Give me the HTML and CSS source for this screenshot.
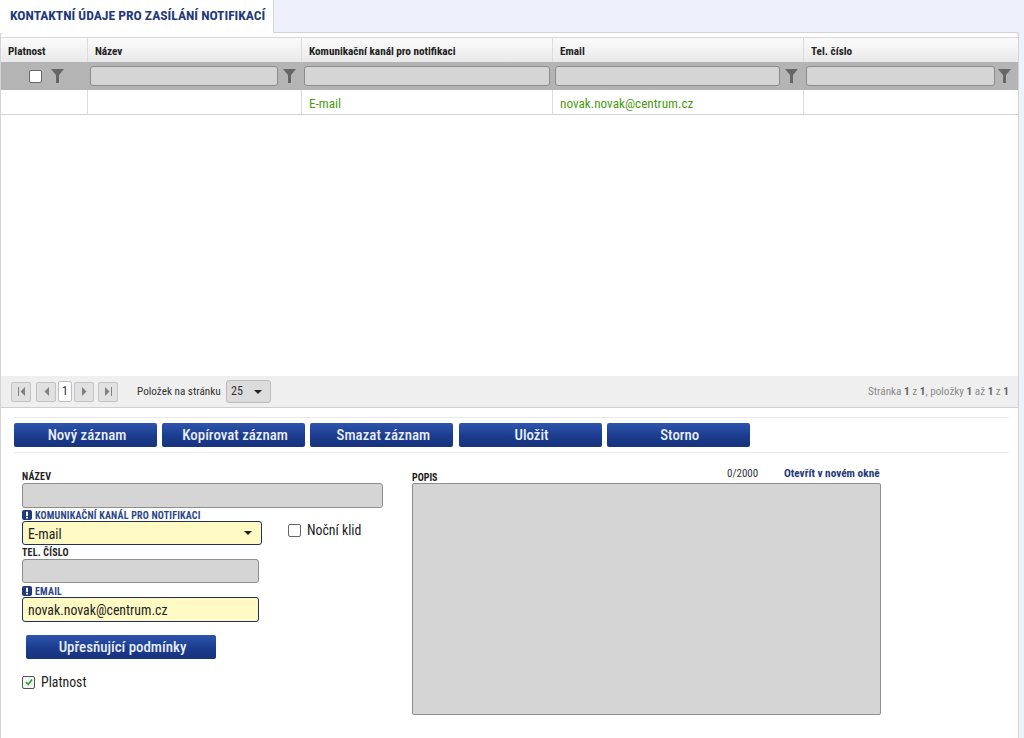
FILE: index.html
```html
<!DOCTYPE html>
<html lang="cs">
<head>
<meta charset="utf-8">
<title>Kontaktní údaje</title>
<link rel="stylesheet" href="styles.css">
</head>
<body>
<svg class="defs" width="0" height="0"><defs>
<symbol id="funnel" viewBox="0 0 13 14"><path d="M0 0H13L8 6V14H5V6Z"/></symbol>
<symbol id="warn" viewBox="0 0 10 10"><rect width="10" height="10" rx="2"/><rect x="4" y="1.7" width="2" height="4.2" fill="#fff"/><rect x="4" y="6.8" width="2" height="1.7" fill="#fff"/></symbol>
</defs></svg>
<div class="tabs"><div class="tab">KONTAKTNÍ ÚDAJE PRO ZASÍLÁNÍ NOTIFIKACÍ</div></div>
<main class="panel">
  <section class="grid">
    <div class="row head">
      <div class="c c1">Platnost</div><div class="c c2">Název</div><div class="c c3">Komunikační kanál pro notifikaci</div><div class="c c4">Email</div><div class="c c5">Tel. číslo</div>
    </div>
    <div class="row filter">
      <div class="c c1 fc1"><span class="cb"></span><svg class="fn"><use href="#funnel"/></svg></div>
      <div class="c c2"><span class="fi"></span><svg class="fn"><use href="#funnel"/></svg></div>
      <div class="c c3"><span class="fi"></span></div>
      <div class="c c4"><span class="fi"></span><svg class="fn"><use href="#funnel"/></svg></div>
      <div class="c c5"><span class="fi"></span><svg class="fn"><use href="#funnel"/></svg></div>
    </div>
    <div class="row data">
      <div class="c c1"></div><div class="c c2"></div><div class="c c3">E-mail</div><div class="c c4">novak.novak@centrum.cz</div><div class="c c5"></div>
    </div>
  </section>
  <div class="pager">
    <div class="pg-btns">
      <span class="pb pb-first"><svg width="9" height="9" viewBox="0 0 9 9"><path d="M1 0h1v9H1zM8 0v9L3.5 4.5z"/></svg></span>
      <span class="pb pb-prev"><svg width="9" height="9" viewBox="0 0 9 9"><path d="M7 0v9L2.5 4.5z"/></svg></span>
      <span class="pcur">1</span>
      <span class="pb pb-next"><svg width="9" height="9" viewBox="0 0 9 9"><path d="M2 0v9l4.5-4.5z"/></svg></span>
      <span class="pb pb-last"><svg width="9" height="9" viewBox="0 0 9 9"><path d="M1 0v9l4.500-4.500zM7 0h1v9H7z"/></svg></span>
    </div>
    <span class="pg-label">Položek na stránku</span>
    <span class="pg-size">25<i class="caret"></i></span>
    <span class="pg-info">Stránka <b>1</b> z <b>1</b>, položky <b>1</b> až <b>1</b> z <b>1</b></span>
  </div>
  <div class="toolbar">
    <button class="btn">Nový záznam</button><button class="btn">Kopírovat záznam</button><button class="btn">Smazat záznam</button><button class="btn">Uložit</button><button class="btn">Storno</button>
  </div>
  <div class="form">
    <div class="left">
      <div class="lbl lbl-first">NÁZEV</div>
      <div class="inp inp-name"></div>
      <div class="lbl req"><svg class="wi"><use href="#warn"/></svg>KOMUNIKAČNÍ KANÁL PRO NOTIFIKACI</div>
      <div class="sel-row">
        <div class="inp yellow sel">E-mail<i class="caret"></i></div>
        <label class="chk chk-night"><span class="cb"></span>Noční klid</label>
      </div>
      <div class="lbl">TEL. ČÍSLO</div>
      <div class="inp inp-short"></div>
      <div class="lbl req"><svg class="wi"><use href="#warn"/></svg>EMAIL</div>
      <div class="inp inp-short yellow">novak.novak@centrum.cz</div>
      <button class="btn btn-more">Upřesňující podmínky</button>
      <label class="chk chk-valid"><span class="cb checked"><svg width="10" height="10" viewBox="0 0 10 10"><path d="M2 5l2.200 2.500L8 2.500" fill="none" stroke="#2e9a3a" stroke-width="1.600"/></svg></span>Platnost</label>
    </div>
    <div class="right">
      <div class="popis-head"><span class="lbl-p">POPIS</span><span class="count">0/2000</span><a class="open">Otevřít v novém okně</a></div>
      <div class="area"></div>
    </div>
  </div>
</main>
</body>
</html>
```
FILE: styles.css
```css
* { box-sizing: border-box; }
html, body { margin: 0; height: 738px; overflow: hidden; }
body { background: #edf1fb; font-family: "Roboto Condensed", "Liberation Sans Narrow", Roboto, sans-serif; font-stretch: condensed; color: #1a1a1a; font-size: 14px; }
.defs { display: block; height: 0; }
.tabs { height: 32px; }
.tab { width: 274px; height: 33px; background: #fff; border-right: 1px solid #d3d6dc; color: #1f3a7a; font-weight: 700; font-size: 13.6px; line-height: 31px; padding-left: 10px; white-space: nowrap; position: relative; z-index: 1; }
.panel { width: 1019px; height: 706px; background: #fff; border: 1px solid #d4d4d4; border-bottom: 0; border-radius: 3px 3px 0 0; padding-top: 4px; }
.grid { width: 1017px; border-top: 1px solid #d8d8d8; }
.row { display: flex; }
.c { flex: none; border-right: 1px solid #dcdcdc; padding-left: 7px; }
.c1 { width: 87px; } .c2 { width: 214px; } .c3 { width: 251px; } .c4 { width: 251px; } .c5 { width: 214px; border-right: 0; }
.head { height: 24px; background: linear-gradient(#fbfbfb, #e9e9e9); font-weight: 700; font-size: 11.2px; line-height: 27px; color: #222; }
.filter { height: 28px; background: #b4b4b4; }
.filter .c { display: flex; align-items: center; border-right: 0; padding-left: 2px; }
.filter .fc1 { padding-left: 28px; gap: 9px; }
.fi { display: block; flex: 1; height: 20px; background: #d5d5d5; border: 1px solid #8b8b8b; border-radius: 3px; }
.fn { flex: none; width: 13px; height: 14px; margin: 0 6px 0 5px; fill: #666; }
.filter .c5 .fn { margin: 0 7px 0 3px; }
.filter .c3 { padding-right: 3px; }
.filter .c1 .fn { margin: 0; }
.cb { display: inline-flex; align-items: center; justify-content: center; flex: none; width: 13px; height: 13px; background: #fff; border: 1px solid #666; border-radius: 2px; }
.data { height: 25px; border-bottom: 1px solid #d4d4d4; color: #4c9a12; font-size: 13.2px; line-height: 27px; }
.data .c { height: 24px; }
.pager { height: 32px; margin-top: 261px; background: #efefef; border-bottom: 1px solid #cfcfcf; display: flex; align-items: center; padding: 0 9px 0 10px; font-size: 11.200px; width: 1017px; white-space: nowrap; }
.pg-btns { display: flex; align-items: center; width: 126px; }
.pb { display: flex; align-items: center; justify-content: center; width: 20px; height: 20px; background: #e1e1e1; border: 1px solid #c2c2c2; border-radius: 2px; fill: #808080; }
.pb-prev { margin-left: 5px; }
.pb-next { margin-left: 2px; }
.pb-last { margin-left: 4px; }
.pcur { width: 14px; height: 21px; margin-left: 2px; background: #fff; border: 1px solid #bdbdbd; border-radius: 2px; text-align: center; line-height: 19px; color: #333; font-size: 12px; }
.pg-label { width: 89px; color: #333; }
.pg-size { position: relative; width: 45px; height: 23px; background: #dcdcdc; border: 1px solid #bcbcbc; border-radius: 3px; padding-left: 4px; line-height: 21px; color: #333; font-size: 12px; }
.pg-size .caret { right: 8px; top: 9px; }
.pg-info { margin-left: auto; color: #8a8a8a; }
.pg-info b { color: #666; }
.caret { position: absolute; width: 0; height: 0; border-left: 4px solid transparent; border-right: 4px solid transparent; border-top: 4px solid #222; }
.toolbar { margin: 9px 9px 0 13px; height: 36px; border-top: 1px solid #eaeaea; border-bottom: 1px solid #eaeaea; padding-top: 5px; display: flex; gap: 5.200px; }
.btn { display: block; flex: none; width: 143px; height: 24px; padding: 0 0 0 3px; border: 0; border-radius: 2px; background: linear-gradient(#2e55ae, #1b3c8d 55%, #17327c); color: #e9eef9; font-family: inherit; font-stretch: inherit; font-size: 14.900px; font-weight: 500; line-height: 24px; }
.form { display: flex; padding: 15px 0 0 21px; }
.left { width: 390px; }
.lbl { height: 14px; font-size: 10px; font-weight: 700; line-height: 15px; color: #222; letter-spacing: .2px; }
.lbl-first { height: 15px; line-height: 18px; }
.req { color: #2a4688; display: flex; align-items: center; gap: 3px; padding-top: 2px; }
.wi { flex: none; width: 10px; height: 10px; fill: #1f3a7a; }
.inp { height: 24px; background: #d5d5d5; border: 1px solid #8e8e8e; border-radius: 3px; font-size: 13.800px; line-height: 25px; padding-left: 5px; color: #222; }
.inp-name { width: 361px; height: 25px; margin-bottom: -1px; }
.inp-short { width: 237px; }
.inp-short.yellow { height: 25px; }
.yellow { background: #fff9c4; border-color: #1f2f5f; }
.sel-row { display: flex; height: 24px; position: relative; }
.sel { width: 240px; position: relative; }
.sel .caret { right: 9px; top: 9px; }
.chk { display: flex; align-items: center; gap: 6px; font-size: 13.800px; color: #222; }
.chk-night { position: absolute; left: 266px; top: -3px; height: 24px; }
.btn-more { width: 190px; margin: 13px 0 0 4px; }
.chk-valid { margin-top: 14px; height: 18px; }
.checked { border-color: #555; background: #f3f6f0; }
.right { width: 470px; margin-left: 0; }
.popis-head { display: flex; height: 15px; align-items: flex-start; font-size: 11px; position: relative; }
.lbl-p { font-weight: 700; font-size: 10px; line-height: 14px; margin-top: 3px; }
.count { position: absolute; left: 315px; top: -1px; color: #333; line-height: 14px; font-size: 11px; }
.open { position: absolute; left: 372px; top: -1px; color: #1f3a7a; font-weight: 700; line-height: 14px; font-size: 11.300px; }
.area { width: 469px; height: 232px; background: #d5d5d5; border: 1px solid #8e8e8e; border-radius: 2px; }
```
